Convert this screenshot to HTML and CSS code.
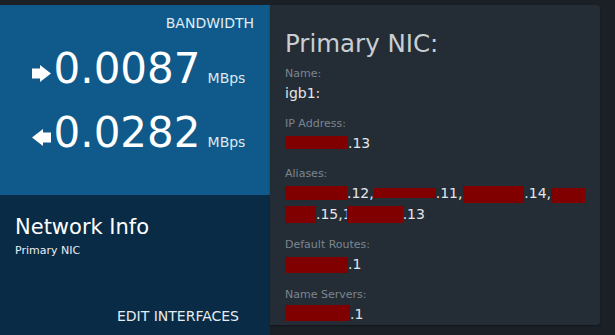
FILE: index.html
```
<!DOCTYPE html>
<html>
  <head>
    <title>network info</title>
    <link rel="stylesheet" href="styles.css">
    <meta name="viewport" content="width=device-width, initial-scale=1" />
  </head>
  <body>
    <div class="wrap">
      <div class="side">
        <div class="bandwidth">
          <div class="title">BANDWIDTH</div>
          <div class="rates">
            <div class="rate"><svg class="arrow" viewBox="0 0 19 17"><polygon points="0,3.5 8,3.5 8,0 19,8.5 8,17 8,13.5 0,13.5" /></svg><span class="value">0.0087</span><span class="unit">MBps</span></div>
            <div class="rate"><svg class="arrow" viewBox="0 0 19 17"><polygon points="19,3.5 11,3.5 11,0 0,8.5 11,17 11,13.5 19,13.5" /></svg><span class="value">0.0282</span><span class="unit">MBps</span></div>
          </div>
        </div>
        <div class="info">
          <div class="info-title">Network Info</div>
          <div class="info-sub">Primary NIC</div>
          <div class="edit">EDIT INTERFACES</div>
        </div>
      </div>
      <div class="card">
        <div class="heading">Primary NIC:</div>
        <div class="label">Name:</div>
        <div class="field">igb1:</div>
        <div class="label">IP Address:</div>
        <div class="field"><span class="mask ip"></span>.13</div>
        <div class="label">Aliases:</div>
        <div class="field"><span class="mask a1"></span>.12,<span class="mask a2"></span>.11,1<span class="mask a3"></span>.14,<span class="mask a4"></span><br><span class="mask a5"></span>.15,1<span class="mask a6"></span>.13</div>
        <div class="label">Default Routes:</div>
        <div class="field"><span class="mask dr"></span>.1</div>
        <div class="label">Name Servers:</div>
        <div class="field"><span class="mask ns"></span>.1</div>
      </div>
    </div>
  </body>
</html>
```

FILE: styles.css
```
body {
  margin: 0;
  height: 335px;
  overflow: hidden;
  background: #1b2027;
  font-family: "DejaVu Sans", Verdana, sans-serif;
}
body .wrap {
  display: flex;
  align-items: flex-start;
  padding-top: 5px;
}
body .wrap .side {
  width: 270px;
  flex: none;
}
body .wrap .bandwidth {
  height: 190px;
  box-sizing: border-box;
  padding-top: 10px;
  background: #0f5a8a;
}
body .wrap .bandwidth .title {
  font-size: 14px;
  line-height: 17px;
  text-align: right;
  padding-right: 16px;
  color: #e3ecf3;
}
body .wrap .bandwidth .rates {
  margin-top: 5px;
}
body .wrap .bandwidth .rate {
  font-size: 42px;
  line-height: 64px;
  text-align: center;
  padding-left: 7px;
  color: #ffffff;
  white-space: nowrap;
}
body .wrap .bandwidth .rate .arrow {
  width: 19px;
  height: 17px;
  margin-right: 3px;
  vertical-align: 1px;
  fill: #ffffff;
}
body .wrap .bandwidth .rate .unit {
  font-size: 14px;
  line-height: 1;
  margin-left: 7px;
  color: #dfe7ee;
}
body .wrap .info {
  height: 140px;
  box-sizing: border-box;
  display: flex;
  flex-direction: column;
  padding: 19px 0 10px 15px;
  background: #0a2b45;
  color: #ffffff;
}
body .wrap .info .info-title {
  font-size: 21px;
  line-height: 26px;
}
body .wrap .info .info-sub {
  font-size: 11px;
  line-height: 14px;
  margin-top: 4px;
  color: #e8eef3;
}
body .wrap .info .edit {
  margin-top: auto;
  font-size: 14px;
  line-height: 17px;
  text-align: right;
  padding-right: 31px;
  color: #e6ecf1;
}
body .wrap .card {
  width: 330px;
  height: 320px;
  flex: none;
  box-sizing: border-box;
  padding: 24px 15px 0;
  background: #242d36;
  border-radius: 0 3px 3px 0;
  box-shadow: 0 1px 2px rgba(0, 0, 0, 0.35);
}
body .wrap .card .heading {
  font-size: 24.5px;
  line-height: 30px;
  margin-bottom: 8px;
  color: #c9ced3;
}
body .wrap .card .label {
  font-size: 11px;
  line-height: 14px;
  color: #7c858e;
}
body .wrap .card .field {
  font-size: 14px;
  line-height: 21px;
  margin: 2px 0 13px;
  color: #e4e6e8;
  white-space: nowrap;
}
body .wrap .card .mask {
  display: inline-block;
  background: #800000;
}
body .wrap .card .mask.ip {
  width: 63px;
  height: 13px;
  vertical-align: -1px;
}
body .wrap .card .mask.a1 {
  width: 62px;
  height: 14px;
  vertical-align: -2px;
}
body .wrap .card .mask.a2 {
  width: 62px;
  height: 10px;
  vertical-align: 0;
}
body .wrap .card .mask.a3 {
  width: 61px;
  height: 17px;
  margin-left: -8px;
  vertical-align: -5px;
}
body .wrap .card .mask.a4 {
  width: 34px;
  height: 15px;
  vertical-align: -5px;
}
body .wrap .card .mask.a5 {
  width: 31px;
  height: 17px;
  vertical-align: -4px;
}
body .wrap .card .mask.a6 {
  width: 56px;
  height: 17px;
  margin-left: -5px;
  vertical-align: -4px;
}
body .wrap .card .mask.dr {
  width: 63px;
  height: 16px;
  vertical-align: -4px;
}
body .wrap .card .mask.ns {
  width: 65px;
  height: 16px;
  vertical-align: -2px;
}
```
